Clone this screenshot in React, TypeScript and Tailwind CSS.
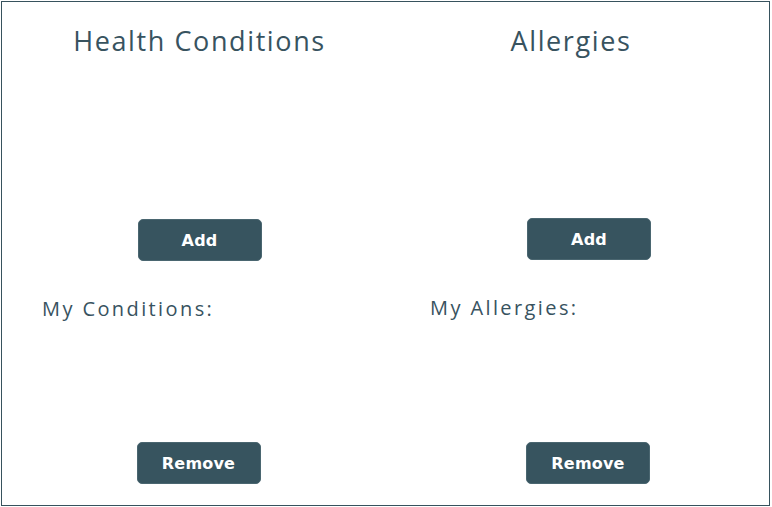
import React from "react";

const Btn = ({ label, className = "" }: { label: string; className?: string }) => (
  <button
    className={
      "w-[124px] h-[42px] rounded-[5px] bg-[#37545f] text-white text-[16px] font-bold tracking-[0.2px] pt-px font-['DejaVu_Sans','Inter',sans-serif] border border-[#4a6670] " +
      className
    }
  >
    {label}
  </button>
);

export default function App() {
  return (
    <div className="w-[772px] h-[507px] bg-white p-px">
      <div className="w-[769px] h-[505px] border border-[#37525d] grid grid-cols-[395px_1fr] font-['Open_Sans','Noto_Sans',sans-serif] text-[#38535f]">
        <div className="flex flex-col items-center">
          <h1 className="mt-[22px] h-[34px] text-[27px] leading-[34px] tracking-[1.6px]">Health Conditions</h1>
          <div className="h-[161px]" />
          <Btn label="Add" />
          <div className="self-stretch pl-[40px] mt-[32px] h-[32px] text-[20px] leading-[32px] tracking-[2.4px]">My Conditions:</div>
          <div className="h-[117px]" />
          <Btn label="Remove" className="-translate-x-px" />
        </div>
        <div className="flex flex-col items-center pl-[12px]">
          <h1 className="mt-[22px] h-[34px] mr-[36px] text-[27px] leading-[34px] tracking-[1.6px]">Allergies</h1>
          <div className="h-[160px]" />
          <Btn label="Add" />
          <div className="self-stretch pl-[21px] mt-[32px] h-[32px] text-[20px] leading-[32px] tracking-[2.4px]">My Allergies:</div>
          <div className="h-[118px]" />
          <Btn label="Remove" className="-translate-x-px" />
        </div>
      </div>
    </div>
  );
}
